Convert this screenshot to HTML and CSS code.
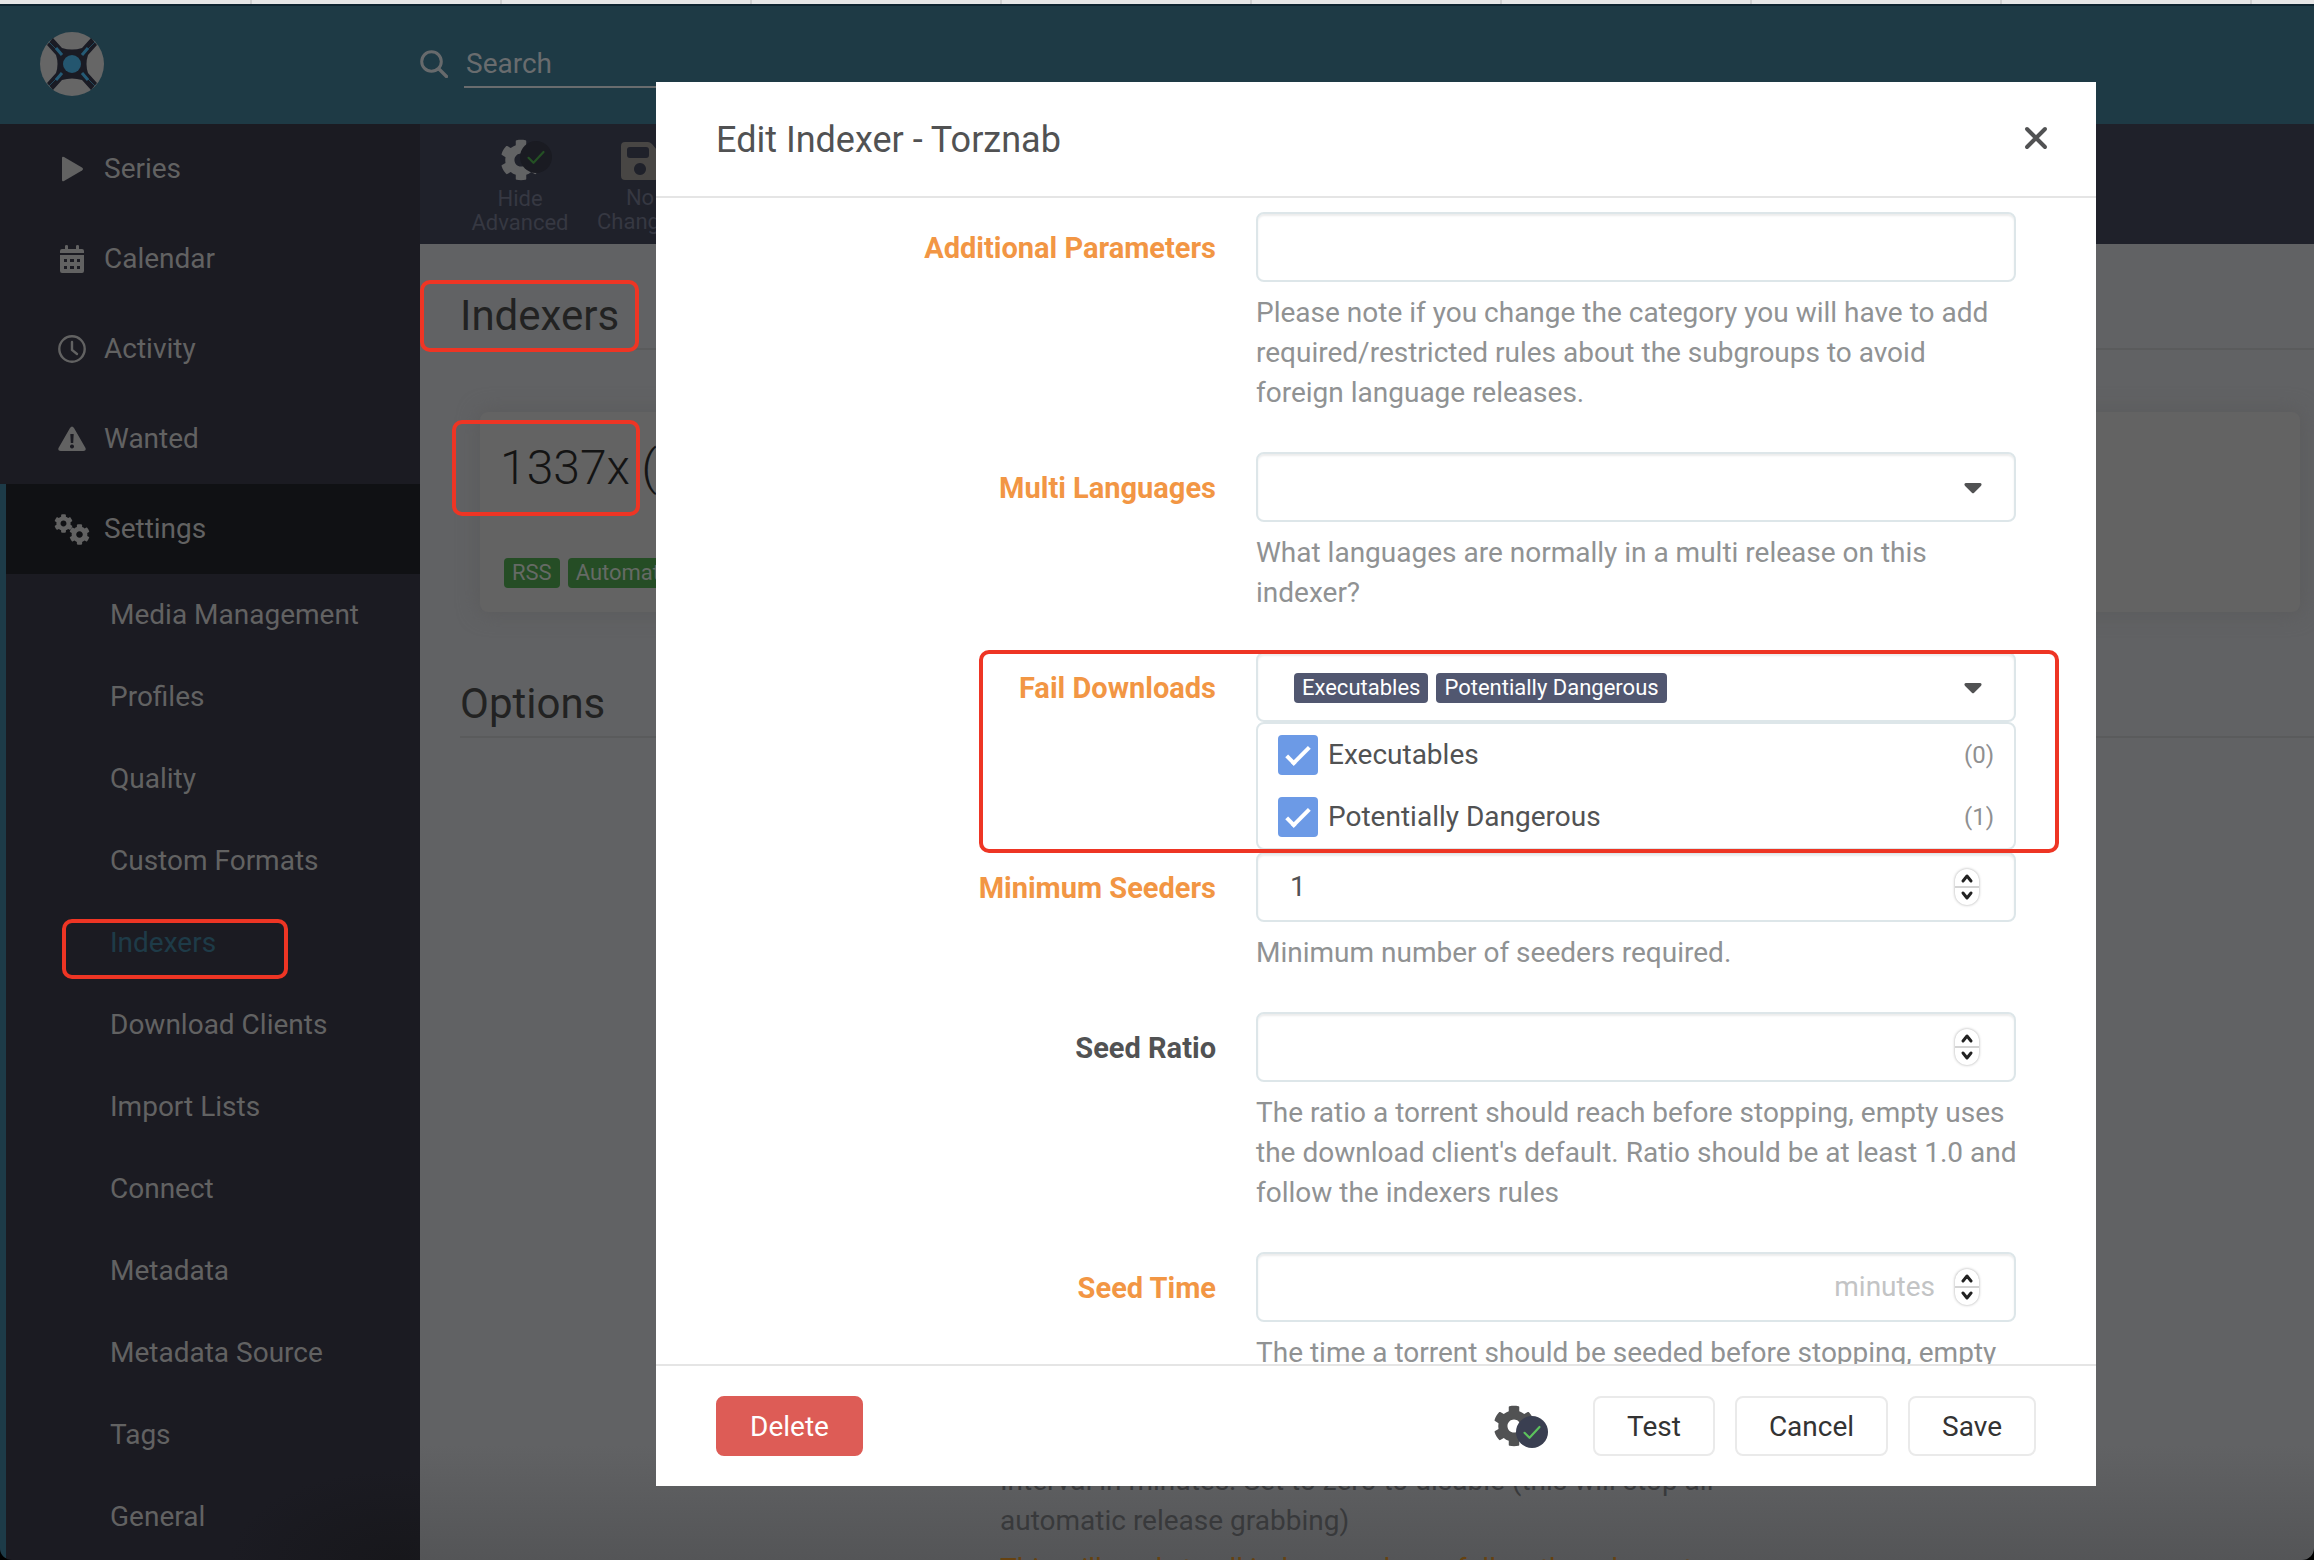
FILE: index.html
```html
<!DOCTYPE html>
<html lang="en">
<head>
<meta charset="utf-8">
<title>Indexers</title>
<link rel="stylesheet" href="styles.css">
</head>
<body>
<svg class="defs" aria-hidden="true">
  <symbol id="gear" viewBox="0 0 512 512"><path fill="currentColor" d="M487.4 315.7l-42.6-24.6c4.3-23.2 4.3-47 0-70.2l42.6-24.6c4.9-2.8 7.1-8.6 5.5-14-11.1-35.6-30-67.8-54.7-94.6-3.8-4.1-10-5.1-14.8-2.3L380.8 110c-17.9-15.4-38.5-27.3-60.8-35.1V25.8c0-5.6-3.9-10.5-9.4-11.7-36.7-8.2-74.3-7.8-109.2 0-5.5 1.2-9.4 6.1-9.4 11.7V75c-22.2 7.9-42.8 19.8-60.8 35.1L88.7 85.5c-4.9-2.8-11-1.9-14.8 2.3-24.7 26.7-43.6 58.9-54.7 94.6-1.7 5.4.6 11.2 5.5 14L67.3 221c-4.3 23.2-4.3 47 0 70.2l-42.6 24.6c-4.9 2.8-7.1 8.6-5.5 14 11.1 35.6 30 67.8 54.7 94.6 3.8 4.1 10 5.1 14.8 2.3l42.6-24.6c17.9 15.4 38.5 27.3 60.8 35.1v49.2c0 5.6 3.9 10.5 9.4 11.7 36.7 8.2 74.3 7.8 109.2 0 5.5-1.2 9.4-6.1 9.4-11.7v-49.2c22.2-7.9 42.8-19.8 60.8-35.1l42.6 24.6c4.9 2.8 11 1.9 14.8-2.3 24.7-26.7 43.6-58.9 54.7-94.6 1.5-5.5-.7-11.3-5.6-14.1zM256 336c-44.1 0-80-35.9-80-80s35.9-80 80-80 80 35.9 80 80-35.9 80-80 80z"/></symbol>
  <symbol id="check" viewBox="0 0 24 24"><path fill="none" stroke="currentColor" stroke-width="2.6" stroke-linecap="round" stroke-linejoin="round" d="M3 13l6 6L21 6"/></symbol>
  <symbol id="spin" viewBox="0 0 24 36"><path d="M0 18h24" stroke="#d4d4d4" stroke-width="2"/><path fill="none" stroke="#222" stroke-width="3" stroke-linecap="round" stroke-linejoin="round" d="M8 12l4-5 4 5M8 24l4 5 4-5"/></symbol>
  <symbol id="caret" viewBox="0 0 20 12"><path fill="currentColor" d="M2 0h16a2 2 0 0 1 1 3l-8 8a2 2 0 0 1-2 0L1 3a2 2 0 0 1 1-3z"/></symbol>
</svg>

<div class="tabs"><i></i><i></i><i></i><i></i><i></i><i></i><i></i><i></i><i></i></div>
<div class="window">
  <header class="top">
    <a class="logo" href="#" aria-label="Home">
      <svg width="64" height="64" viewBox="0 0 64 64">
        <circle cx="32" cy="32" r="32" fill="#666"/>
        <path fill="#1a1b24" d="M13 6l-6 7 9 10q3 9 0 18L7 51l6 7 9-10q10-3 20 0l9 10 6-7-9-10q-3-9 0-18l9-10-6-7-9 10q-10 3-20 0z"/>
        <path stroke="#24485c" stroke-width="1" d="M9 10l8 8M55 10l-8 8M9 54l8-8M55 54l-8-8"/>
        <path stroke="#255a75" stroke-width="3" d="M16 16l6 7M48 16l-6 7M16 48l6-7M48 48l-6-7"/>
        <circle cx="32" cy="32" r="9" fill="#24566f"/>
      </svg>
    </a>
    <form class="search">
      <label for="q"><svg width="28" height="28" viewBox="0 0 28 28"><circle cx="11.500" cy="11.500" r="9.800" fill="none" stroke="#676a6c" stroke-width="3"/><path d="M19 19l7.500 7.500" stroke="#676a6c" stroke-width="3.400" stroke-linecap="round"/></svg></label>
      <input id="q" type="text" placeholder="Search" aria-label="Search">
    </form>
  </header>

  <div class="columns">
    <nav class="side">
      <a href="#"><svg width="28" height="28" viewBox="0 0 28 28"><path fill="currentColor" d="M4 3q0-2 2-1L24 12.500q2 1.500 0 3L6 26q-2 1-2-1z"/></svg>Series</a>
      <a href="#"><svg width="28" height="28" viewBox="0 0 28 28"><path fill="currentColor" fill-rule="evenodd" d="M2 8V6q0-2 2-2h3V1q0-1 1.500-1T10 1v3h8V1q0-1 1.500-1T21 1v3h3q2 0 2 2v2zM2 10h24v16q0 2-2 2H4q-2 0-2-2zm4 4v3h3v-3zm6 0v3h4v-3zm7 0v3h3v-3zM6 21v3h3v-3zm6 0v3h4v-3zm7 0v3h3v-3z"/></svg>Calendar</a>
      <a href="#"><svg width="28" height="28" viewBox="0 0 28 28"><circle cx="14" cy="14" r="12.700" fill="none" stroke="currentColor" stroke-width="2.400"/><path fill="none" stroke="currentColor" stroke-width="2.400" stroke-linecap="round" d="M14 7v8l5 4"/></svg>Activity</a>
      <a href="#"><svg width="28" height="28" viewBox="0 0 28 28"><path fill="currentColor" fill-rule="evenodd" d="M12 3q2-3 4 0l11.500 20q1 3-2 3h-23q-3 0-2-3zm.3 6l.5 9h2.400l.5-9zM14 19.500a2 2 0 1 0 .01 0z"/></svg>Wanted</a>
      <div class="group">
        <a class="current" href="#"><svg width="36" height="32" viewBox="0 0 36 32"><use href="#gear" x="0" y="1" width="19" height="19"/><use href="#gear" x="15" y="11" width="21" height="21"/></svg>Settings</a>
        <ul>
          <li><a href="#">Media Management</a></li>
          <li><a href="#">Profiles</a></li>
          <li><a href="#">Quality</a></li>
          <li><a href="#">Custom Formats</a></li>
          <li><a class="on" href="#">Indexers</a><span class="mark mark-nav"></span></li>
          <li><a href="#">Download Clients</a></li>
          <li><a href="#">Import Lists</a></li>
          <li><a href="#">Connect</a></li>
          <li><a href="#">Metadata</a></li>
          <li><a href="#">Metadata Source</a></li>
          <li><a href="#">Tags</a></li>
          <li><a href="#">General</a></li>
        </ul>
      </div>
    </nav>

    <main>
      <div class="toolbar">
        <button type="button"><span class="adv toggle"><svg class="cog" width="42" height="42"><use href="#gear"/></svg><span class="badge"><svg width="20" height="20"><use href="#check"/></svg></span></span><span>Hide<br>Advanced</span></button>
        <button type="button"><span class="adv save"><svg width="38" height="38" viewBox="0 0 38 38"><path fill="#484644" fill-rule="evenodd" d="M4 0h23q2 0 4 2l5 6q2 2 2 4v22q0 4-4 4H4q-4 0-4-4V4q0-4 4-4zm5 5q-3 0-3 3v5q0 3 3 3h16q3 0 3-3V8q0-3-3-3zm10 16a6 6 0 1 0 .01 0z"/></svg></span><span>No<br>Changes</span></button>
      </div>
      <div class="content">
        <section>
          <h2><span class="boxed">Indexers<span class="mark mark-title"></span></span></h2>
          <article class="card">
            <h3><span class="boxed">1337x<span class="mark mark-card"></span></span> (</h3>
            <p><span class="tag">RSS</span><span class="tag">Automatic</span></p>
          </article>
        </section>
        <section>
          <h2>Options</h2>
          <div class="interval">
            <p>Interval in minutes. Set to zero to disable (this will stop all automatic release grabbing)</p>
            <p class="warn">This will apply to all indexers, please follow the rules set forth by them</p>
          </div>
        </section>
      </div>
    </main>
  </div>
</div>

<div class="backdrop">
  <div class="modal" role="dialog" aria-labelledby="dlg">
    <header>
      <h1 id="dlg">Edit Indexer - Torznab</h1>
      <button class="close" type="button" aria-label="Close"><svg width="24" height="24" viewBox="0 0 24 24"><path stroke="#515253" stroke-width="4" stroke-linecap="round" d="M3 3l18 18M21 3L3 21"/></svg></button>
    </header>
    <form class="body">
      <div class="row">
        <label class="adv-label" for="params">Additional Parameters</label>
        <div class="field"><input class="box" id="params" type="text">
          <p>Please note if you change the category you will have to add required/restricted rules about the subgroups to avoid foreign language releases.</p></div>
      </div>
      <div class="row">
        <label class="adv-label" for="langs">Multi Languages</label>
        <div class="field"><button class="box pick" id="langs" type="button"><svg class="caret" width="18" height="11"><use href="#caret"/></svg></button>
          <p>What languages are normally in a multi release on this indexer?</p></div>
      </div>
      <div class="row tall">
        <label class="adv-label" for="fail">Fail Downloads</label>
        <div class="field"><button class="box pick" id="fail" type="button"><span class="chip">Executables</span><span class="chip">Potentially Dangerous</span><svg class="caret" width="18" height="11"><use href="#caret"/></svg></button>
          <div class="menu">
            <label><input type="checkbox" checked><span>Executables</span><em>(0)</em></label>
            <label><input type="checkbox" checked><span>Potentially Dangerous</span><em>(1)</em></label>
          </div></div>
        <span class="mark mark-fail"></span>
      </div>
      <div class="row">
        <label class="adv-label" for="seeders">Minimum Seeders</label>
        <div class="field"><div class="box num"><input id="seeders" type="text" inputmode="numeric" value="1"><svg class="spin" width="24" height="36"><use href="#spin"/></svg></div>
          <p>Minimum number of seeders required.</p></div>
      </div>
      <div class="row">
        <label for="ratio">Seed Ratio</label>
        <div class="field"><div class="box num"><input id="ratio" type="text" inputmode="decimal"><svg class="spin" width="24" height="36"><use href="#spin"/></svg></div>
          <p>The ratio a torrent should reach before stopping, empty uses the download client's default. Ratio should be at least 1.0 and follow the indexers rules</p></div>
      </div>
      <div class="row">
        <label class="adv-label" for="time">Seed Time</label>
        <div class="field"><div class="box num"><input id="time" type="text" inputmode="numeric"><span class="unit">minutes</span><svg class="spin" width="24" height="36"><use href="#spin"/></svg></div>
          <p>The time a torrent should be seeded before stopping, empty</p></div>
      </div>
    </form>
    <footer>
      <button class="btn danger" type="button">Delete</button>
      <button class="adv foot" type="button" aria-label="Hide advanced"><svg class="cog" width="42" height="42"><use href="#gear"/></svg><span class="badge"><svg width="20" height="20"><use href="#check"/></svg></span></button>
      <button class="btn" type="button">Test</button>
      <button class="btn" type="button">Cancel</button>
      <button class="btn" type="button">Save</button>
    </footer>
  </div>
</div>
</body>
</html>
```

FILE: styles.css
```css
*, *::before { box-sizing: border-box; }
html, body { height: 100%; }
body {
  margin: 0;
  display: flex;
  flex-direction: column;
  overflow: hidden;
  background: #000;
  font: 28px/40px Roboto, "Liberation Sans", sans-serif;
  color: #515253;
}
h1, h2, h3, p, ul { margin: 0; padding: 0; font-weight: 400; }
ul { list-style: none; }
a { color: inherit; text-decoration: none; }
button, input { font: inherit; color: inherit; }
button { margin: 0; padding: 0; border: 0; background: none; }
svg { display: block; flex: none; }
.defs { position: absolute; width: 0; height: 0; }

/* Browser tab edge */
.tabs { display: flex; height: 4px; flex: none; padding-left: 2px; background: #e6e6e6; }
.tabs i { width: 250px; border-right: 2px solid #cfcfcf; }

.window {
  flex: 1;
  min-height: 0;
  display: flex;
  flex-direction: column;
  overflow: hidden;
  border-radius: 0 0 12px 12px;
}
.top {
  display: flex;
  align-items: center;
  height: 120px;
  flex: none;
  padding: 0 0 2px 40px;
  background: #1e3a45;
  border-top: 2px solid #0e2430;
}
.logo { width: 380px; }
.search { display: flex; align-items: center; gap: 16px; color: #696c6e; }
.search input {
  width: 400px;
  height: 48px;
  padding: 0 2px;
  border: 0;
  border-bottom: 2px solid #696c6e;
  background: none;
}
.search input::placeholder { color: #696c6e; opacity: 1; }

.columns { flex: 1; min-height: 0; display: flex; }
.side {
  width: 420px;
  flex: none;
  background: radial-gradient(170px 90px at 400px 100%, #17171b, #1b1b22);
  color: #626262;
}
.side > a, .current { display: flex; align-items: center; height: 90px; padding-left: 58px; gap: 18px; }
.group { border-left: 6px solid #1d3b48; }
.group .current { padding-left: 48px; gap: 14px; background: #101114; }
.group li { position: relative; }
.group li a { display: block; padding: 21px 0 21px 104px; }
.group li .on { color: #1e3b48; }

main { flex: 1; min-width: 0; display: flex; flex-direction: column; background: linear-gradient(#616264 92%, #545557); }
.toolbar { display: flex; height: 120px; flex: none; padding: 15px 40px; background: #1f212a; }
.toolbar button {
  width: 120px;
  display: flex;
  flex-direction: column;
  align-items: center;
  gap: 6px;
  color: #363842;
  font-size: 22px;
  line-height: 24px;
}
.adv { position: relative; width: 52px; height: 44px; color: #626364; }
.toggle { margin-left: 12px; }
.badge {
  position: absolute;
  right: 0;
  top: 2px;
  width: 32px;
  height: 32px;
  display: grid;
  place-items: center;
  border-radius: 50%;
  background: #1a1b22;
  color: #245024;
}
.save { width: 38px; padding-top: 3px; }

.content { padding: 40px 0 0 40px; }
h2 { width: 100%; height: 66px; font-size: 42px; line-height: 64px; color: #222; border-bottom: 2px solid #5a5b5c; }
.boxed { position: relative; }
.card {
  height: 200px;
  margin: 62px 14px 60px 20px;
  padding: 24px;
  border-radius: 8px;
  background: #636363;
  box-shadow: 0 0 20px 2px #5b5b5c;
}
h3 { margin-left: -4px; font-size: 48px; line-height: 64px; font-weight: 300; color: #141414; }
.card p { display: flex; gap: 8px; margin-top: 58px; }
.tag { padding: 0 8px; border-radius: 4px; background: #254d25; color: #656a65; font-size: 22px; line-height: 30px; }
.interval { width: 760px; margin: 723px 0 0 540px; color: #38393b; }
.warn { margin-top: 8px; color: #664210; }

/* Hand-drawn style highlight frames */
.mark { position: absolute; border: 4px solid #ee3524; border-radius: 10px; pointer-events: none; }
.mark-nav { left: 56px; top: 17px; width: 226px; height: 60px; }
.mark-title { left: -40px; top: -11px; width: 219px; height: 72px; }
.mark-card { left: -48px; top: -19px; width: 188px; height: 96px; }
.mark-fail { left: 323px; top: -2px; width: 1080px; height: 203px; z-index: 3; }

/* The dialog is centred in the space right of the navigation */
.backdrop { position: fixed; inset: 8px 0 0 438px; display: grid; place-items: center; }
.modal {
  width: 1440px;
  max-width: 90%;
  height: 90vh;
  display: flex;
  flex-direction: column;
  background: #fff;
}
.modal > header {
  display: flex;
  align-items: center;
  justify-content: space-between;
  height: 116px;
  flex: none;
  padding: 0 36px 0 60px;
  border-bottom: 2px solid #e5e5e5;
}
h1 { padding-top: 2px; font-size: 36px; line-height: 50px; }
.close { padding: 12px 12px 14px; }
.body { flex: 1; min-height: 0; overflow: hidden; padding-top: 14px; }
.row { position: relative; display: flex; gap: 40px; padding: 0 80px 39px 60px; }
.row > label { width: 500px; flex: none; padding-top: 16px; text-align: right; font-size: 29px; font-weight: 700; }
.row > .adv-label { color: #f29644; }
.tall { height: 200px; }
.field { position: relative; flex: 1; min-width: 0; }
.field p { margin: 11px -2px 0 0; color: #909293; }
.box {
  display: flex;
  align-items: center;
  width: 100%;
  height: 70px;
  padding: 0 35px 0 32px;
  border: 2px solid #dde6e9;
  border-radius: 8px;
  background: #fff;
  box-shadow: inset 0 2px 2px rgba(0, 0, 0, .075);
}
.pick { gap: 8px; padding: 2px 32px 0 36px; }
.caret { margin-left: auto; }
.chip { padding: 0 8px; border-radius: 4px; background: #515770; color: #fff; font-size: 22px; line-height: 30px; }
.num input { flex: 1; min-width: 0; padding: 0; border: 0; outline: 0; background: none; }
.spin { border-radius: 12px; box-shadow: 0 0 3px rgba(0, 0, 0, .35); }
.unit { margin-right: 20px; color: #c3c4c5; }
.menu {
  position: absolute;
  left: 0;
  right: 0;
  top: 70px;
  z-index: 2;
  padding: 0 20px;
  border: 2px solid #dde6e9;
  border-radius: 8px;
  background: #fff;
}
.menu label { display: flex; align-items: center; gap: 10px; height: 62px; }
.menu em { margin-left: auto; font-style: normal; font-size: 24px; color: #8f9091; }
.menu input {
  appearance: none;
  display: grid;
  place-items: center;
  width: 40px;
  height: 40px;
  margin: 0;
  border-radius: 4px;
  background: #6c9ae6;
}
.menu input::before {
  content: "";
  width: 24px;
  height: 12px;
  border: solid #fff;
  border-width: 0 0 4px 4px;
  transform: translateY(-2px) rotate(-45deg);
}

.modal footer { display: flex; align-items: center; gap: 20px; height: 122px; flex: none; padding: 0 60px; border-top: 2px solid #e5e5e5; }
.btn { height: 60px; padding: 1px 32px 0; border: 2px solid #eaeaea; border-radius: 8px; background: #fff; color: #333; }
.danger { border-color: #dd5c56; background: #dd5c56; color: #fff; }
.foot { width: 55px; margin: 0 25px 0 auto; color: #515253; }
.foot .badge { top: 12px; background: #3a3f51; color: #5cc25c; }
```
